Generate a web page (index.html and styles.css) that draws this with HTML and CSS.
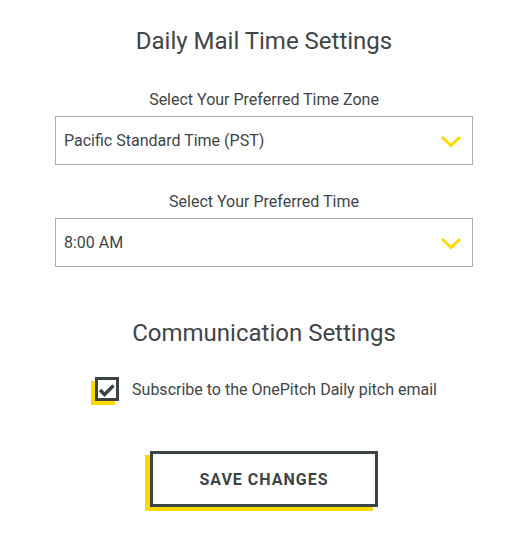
FILE: index.html
```html
<!DOCTYPE html>
<html lang="en">
<head>
<meta charset="utf-8">
<title>Settings</title>
<link rel="stylesheet" href="styles.css">
</head>
<body>
<main class="settings">
  <h2 class="title">Daily Mail Time Settings</h2>
  <label class="field-label">Select Your Preferred Time Zone</label>
  <div class="select">
    <span class="select-value">Pacific Standard Time (PST)</span>
    <svg class="chevron" width="22" height="13" viewBox="0 0 22 13"><path d="M2 2 L11 10.5 L20 2" fill="none" stroke="#ffd800" stroke-width="3"/></svg>
  </div>
  <label class="field-label second">Select Your Preferred Time</label>
  <div class="select">
    <span class="select-value">8:00 AM</span>
    <svg class="chevron" width="22" height="13" viewBox="0 0 22 13"><path d="M2 2 L11 10.5 L20 2" fill="none" stroke="#ffd800" stroke-width="3"/></svg>
  </div>

  <h2 class="title comm">Communication Settings</h2>
  <div class="check-row">
    <span class="checkbox">
      <svg width="18" height="18" viewBox="0 0 18 18"><path d="M2 10 L6.5 14.5 L15.5 5.5" fill="none" stroke="#3d4446" stroke-width="3.4"/></svg>
    </span>
    <span class="check-text">Subscribe to the OnePitch Daily pitch email</span>
  </div>

  <div class="btn-wrap">
    <button class="save">SAVE CHANGES</button>
  </div>
</main>
</body>
</html>
```

FILE: styles.css
```css
* { box-sizing: border-box; }
html, body { margin: 0; padding: 0; background: #fff; }
body {
  font-family: Roboto, "Noto Sans", sans-serif;
  color: #3f4548;
  padding-left: 2px;
}
.settings {
  width: 418px;
  margin: 0 auto;
  padding-top: 27px;
  padding-bottom: 20px;
  display: flex;
  flex-direction: column;
  align-items: stretch;
}
.title {
  margin: 0;
  font-size: 24px;
  line-height: 28px;
  font-weight: 400;
  text-align: center;
  color: #3f4548;
}
.field-label {
  display: block;
  margin-top: 35px;
  font-size: 16px;
  line-height: 20px;
  text-align: center;
}
.field-label.second { margin-top: 27px; }
.select {
  margin-top: 6px;
  height: 49px;
  border: 1px solid #ababab;
  display: flex;
  align-items: center;
  justify-content: space-between;
  padding: 0 10px 0 8px;
}
.select-value { font-size: 16px; }
.chevron { display: block; margin-top: 1px; }
.title.comm { margin-top: 52px; }
.check-row {
  margin-top: 30px;
  display: flex;
  align-items: center;
  justify-content: center;
  gap: 13px;
  padding-left: 4px;
}
.checkbox {
  width: 24px;
  height: 24px;
  flex: none;
  border: 3px solid #3d4446;
  background: #fff;
  display: flex;
  align-items: center;
  justify-content: center;
  box-shadow: -4px 4px 0 #ffd800;
}
.check-text { font-size: 16px; padding-top: 1px; }
.btn-wrap {
  margin-top: 50px;
  display: flex;
  justify-content: center;
}
.save {
  width: 228px;
  height: 56px;
  border: 3px solid #3d4446;
  background: #fff;
  font-family: Roboto, sans-serif;
  font-weight: 700;
  font-size: 16px;
  letter-spacing: 1px;
  color: #3d4446;
  box-shadow: -5px 4px 0 0 #ffd800;
}
```
